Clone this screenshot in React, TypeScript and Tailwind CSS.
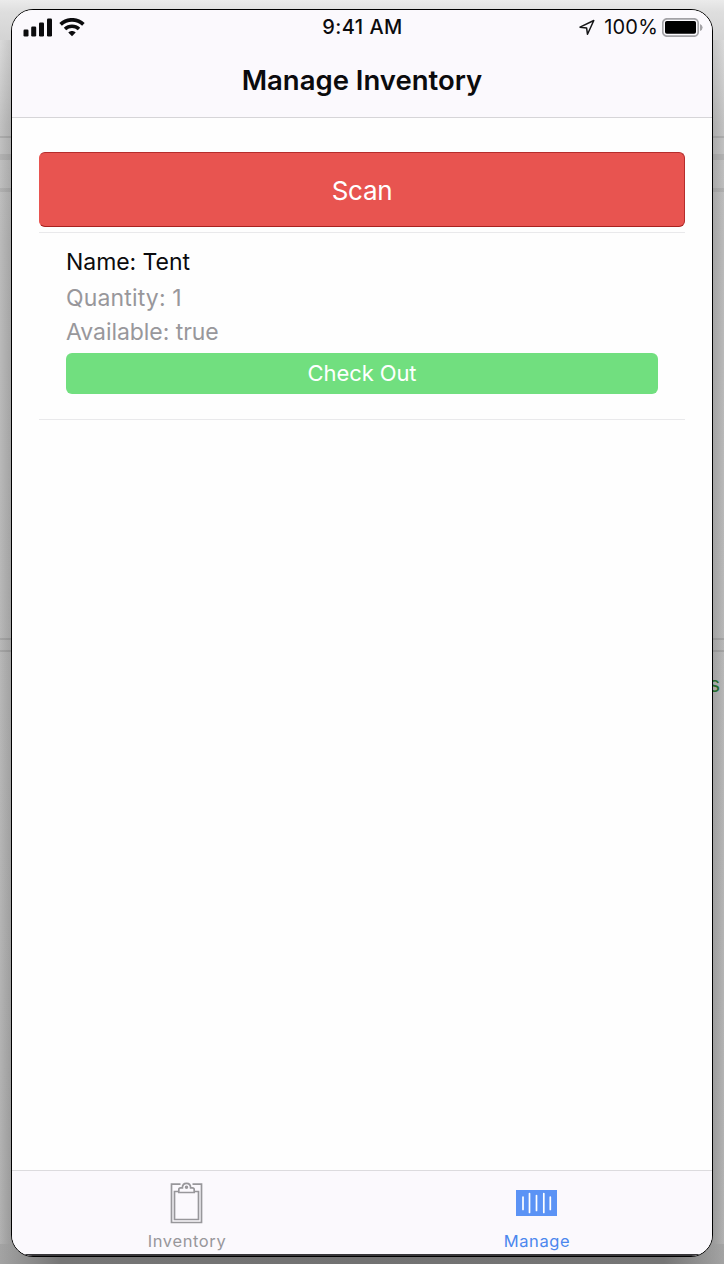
import React from "react";

function StatusBar() {
  return (
    <div className="grid h-[35px] grid-cols-3 items-center pl-[11px] pr-[9px] text-[20px] leading-[35px]">
      <div className="flex items-center gap-[7px]">
        <svg width="29" height="19" viewBox="0 0 29 19" fill="#0b0b0d">
          <rect x="0.5" y="11.5" width="5" height="7" rx="1.2" />
          <rect x="8.2" y="8.5" width="5" height="10" rx="1.2" />
          <rect x="16" y="4.5" width="5" height="14" rx="1.2" />
          <rect x="24" y="0.5" width="5" height="18" rx="1.2" />
        </svg>
        <svg width="26" height="19" viewBox="0 0 26 19" fill="none" stroke="#0b0b0d">
          <path d="M1.6 6.3 C8 0.3 18 0.3 24.4 6.3" strokeWidth="3.7" />
          <path d="M6 11 C10 7.2 16 7.2 20 11" strokeWidth="3.5" />
          <path d="M9.3 14.4 C11.4 12.4 14.6 12.4 16.7 14.4 L13 18.2 Z" fill="#0b0b0d" stroke="none" />
        </svg>
      </div>
      <div className="-ml-[1px] text-center font-medium tracking-[0.45px]">9:41 AM</div>
      <div className="flex items-center justify-end">
        <svg className="mr-[9px]" width="16" height="17" viewBox="0 0 16 17" fill="none" stroke="#151517" strokeWidth="1.5" strokeLinejoin="round">
          <path d="M1 8.2 L14.8 1.5 L8.5 15.3 L7.6 8.9 Z" />
        </svg>
        <span className="mr-[4px] tracking-[0.2px]">100%</span>
        <svg width="41" height="19" viewBox="0 0 41 19">
          <rect x="0.8" y="0.8" width="35.4" height="17.4" rx="4.2" fill="none" stroke="#a3a2a6" strokeWidth="1.7" />
          <rect x="3" y="3" width="31" height="12.8" rx="1.8" fill="#000" />
          <path d="M38 6 Q40.6 7 40.6 9.5 Q40.6 12 38 13 Z" fill="#a3a2a6" />
        </svg>
      </div>
    </div>
  );
}

function ClipboardIcon() {
  return (
    <svg width="33" height="42" viewBox="0 0 33 42" fill="none" stroke="#98979b" strokeWidth="1.7">
      <path d="M10.5 2.2 H1.5 V40.5 H31.5 V2.2 H22.5" />
      <path d="M8.5 9.5 H4.5 V37.5 H28.5 V9.5 H24.5" />
      <path d="M8.8 10.5 V7.5 Q8.8 5.8 10.7 5.8 H12.4 C12.4 -0.2 20.6 -0.2 20.6 5.8 H22.3 Q24.2 5.8 24.2 7.5 V10.5 Z" />
      <circle cx="16.5" cy="5.3" r="0.9" />
    </svg>
  );
}

function BarcodeIcon() {
  return (
    <svg width="41" height="26" viewBox="0 0 41 26">
      <rect width="41" height="26" fill="#5b93f5" />
      <path d="M7 7V19.5M13.5 3.5V22.5M20.5 5.5V20.5M27.8 3.5V22.5M34.3 7V19.5" stroke="#fff" strokeWidth="1.7" strokeLinecap="round" />
    </svg>
  );
}

function Backdrop() {
  return (
    <div className="absolute inset-0 overflow-hidden bg-[linear-gradient(to_bottom,#ebebeb_0px,#dedede_12px,#cecece_55px,#b7b7b7_125px,#afafaf_240px,#ababab_700px,#a5a5a5_1140px,#a3a3a3_1264px)]">
      <div className="absolute bottom-[20px] left-0 top-[40px] w-[12px] bg-linear-to-r from-white/15 to-black/5" />
      <div className="absolute bottom-[20px] right-0 top-[40px] w-[12px] bg-linear-to-l from-white/15 to-black/5" />
      <div className="absolute inset-x-0 top-[136px] h-[2px] bg-black/10" />
      <div className="absolute inset-x-0 top-[154px] h-[6px] bg-black/7" />
      <div className="absolute inset-x-0 top-[188px] h-[4px] bg-black/7" />
      <div className="absolute inset-x-0 top-[638px] h-[2px] bg-black/10" />
      <div className="absolute inset-x-0 top-[650px] h-[2px] bg-black/10" />
      <div className="absolute inset-x-0 bottom-0 h-[20px] bg-[linear-gradient(to_right,transparent,#767676_60px,#727272_50%,#767676_664px,transparent)]" />
      <div className="absolute right-[4px] top-[672px] text-[21px] leading-[26px] text-[#236b2a]">s</div>
    </div>
  );
}

export default function App() {
  return (
    <div className="relative h-[1264px] w-[724px] overflow-hidden font-['Inter',sans-serif] text-[#0b0b0d]">
      <Backdrop />
      <div className="relative px-[11px] pt-[9px]">
        <main className="flex h-[1248px] flex-col overflow-hidden rounded-[22px] border border-black bg-[#fefefe]">
          <header className="h-[108px] shrink-0 border-b border-[#d6d5d8] bg-[#fbf9fd]">
            <StatusBar />
            <h1 className="pt-[17px] text-center text-[27.5px] font-semibold leading-[36px] tracking-[0px]">Manage Inventory</h1>
          </header>
          <section className="flex-1 px-[27px] pt-[34px]">
            <button className="block h-[75px] w-full rounded-[6px] border border-b-[#a8211f] border-l-[#e85450] border-r-[#b52d2c] border-t-[#b52d2c] bg-[#e85450] pt-[2px] text-[26px] tracking-[-0.3px] text-white">
              Scan
            </button>
            <article className="mt-[5px] h-[188px] border-y border-[#e9e9eb] px-[27px] pt-[12px] text-[23px] tracking-[-0.05px]">
              <p className="h-[35px] leading-[35px]">Name: Tent</p>
              <p className="h-[34px] leading-[36px] tracking-[0.15px] text-[#98979b]">Quantity: 1</p>
              <p className="h-[34px] leading-[36px] text-[#98979b]">Available: true</p>
              <button className="mt-[5px] block h-[41px] w-full rounded-[6px] bg-[#71df7f] text-[22px] tracking-[-0.1px] text-white">
                Check Out
              </button>
            </article>
          </section>
          <nav className="grid h-[86px] shrink-0 grid-cols-2 border-b-2 border-t border-b-[#38373a] border-t-[#dcdbde] bg-[#fbf9fd] text-[16.5px] tracking-[0.6px]">
            <div className="flex flex-col items-center pt-[11px] text-[#98979b]">
              <div className="pr-[2px]">
                <ClipboardIcon />
              </div>
              <span className="mt-[6px] leading-[23px]">Inventory</span>
            </div>
            <div className="flex flex-col items-center pt-[19px] text-[#4b87ee]">
              <div className="pr-[2px]">
                <BarcodeIcon />
              </div>
              <span className="mt-[14px] leading-[23px]">Manage</span>
            </div>
          </nav>
        </main>
      </div>
    </div>
  );
}
